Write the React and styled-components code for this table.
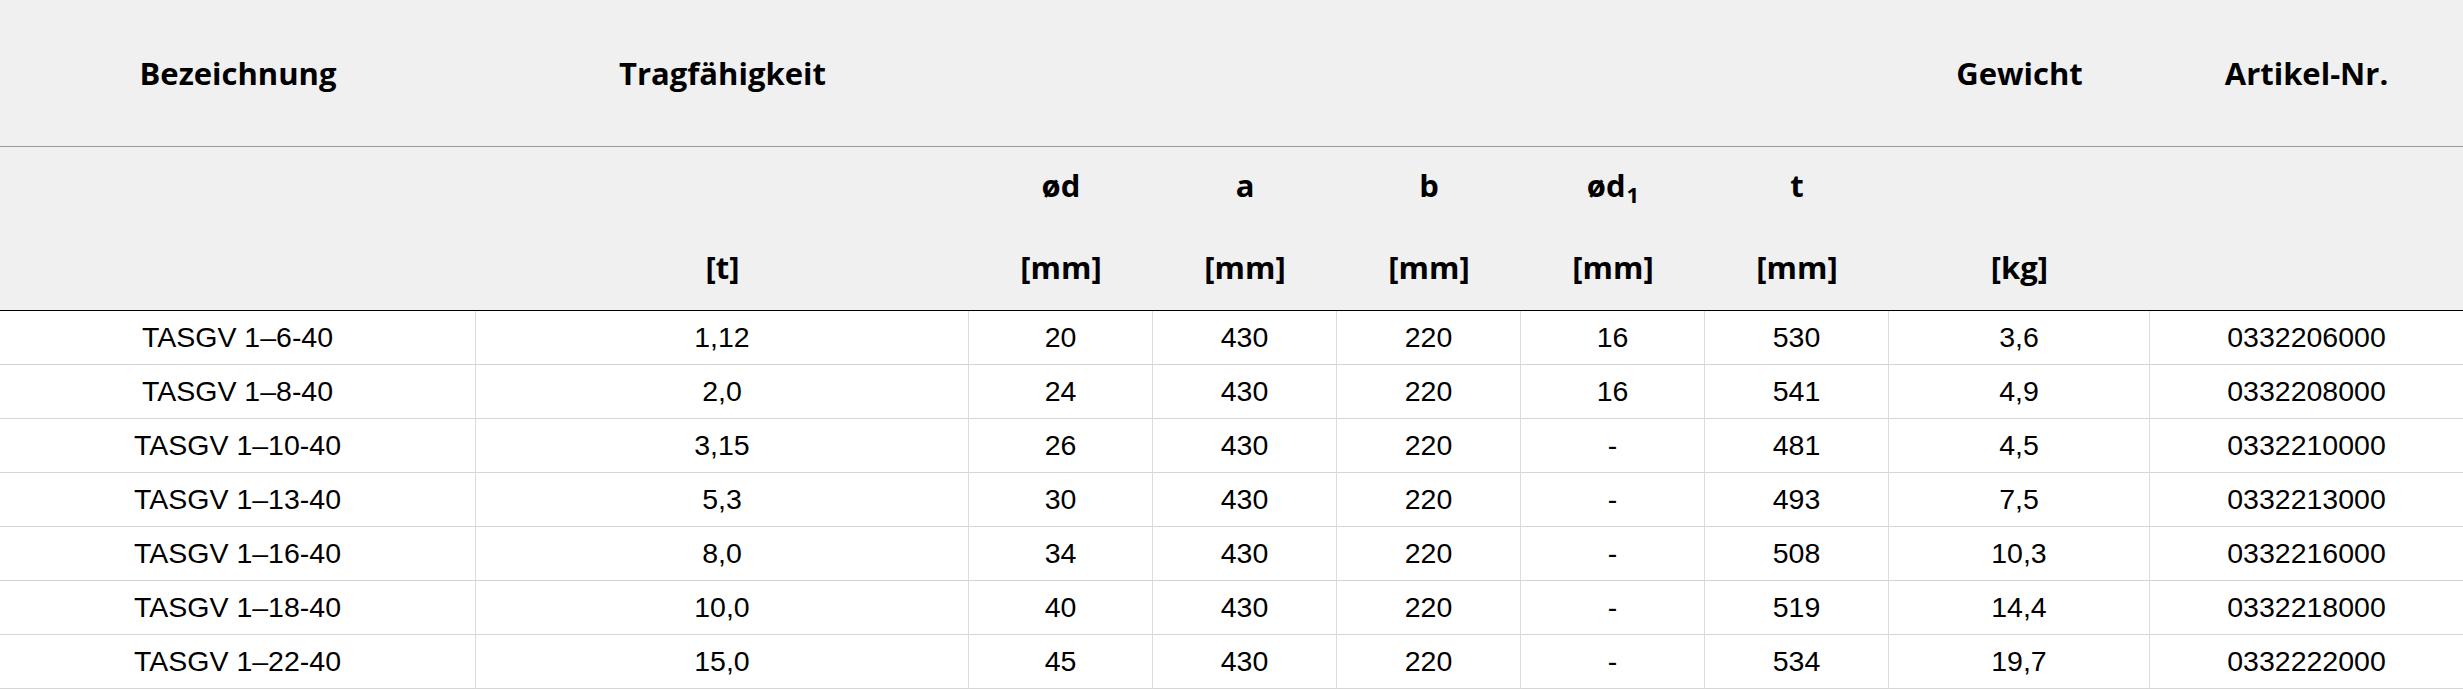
import React from 'react';
import styled, { createGlobalStyle } from 'styled-components';

const GlobalStyle = createGlobalStyle`
  html, body {
    margin: 0;
    padding: 0;
    background: #ffffff;
  }
`;

const Table = styled.table`
  width: 2463px;
  table-layout: fixed;
  border-collapse: separate;
  border-spacing: 0;
  font-family: 'Liberation Sans', Arial, sans-serif;
  color: #000;
`;

const HeadRow = styled.tr`
  height: ${props => props.h}px;
  background: #f0f0f0;
`;

const HeadCell = styled.th`
  padding: 0 0 ${props => props.lift || 0}px;
  font-family: 'Open Sans', 'Liberation Sans', sans-serif;
  font-weight: 700;
  font-size: 31px;
  text-align: center;
  vertical-align: middle;
  white-space: nowrap;
  border-bottom: ${props =>
    props.line === 'top' ? '1px solid #9a9a9a' : props.line === 'bottom' ? '1px solid #000' : 'none'};
`;

const Sub = styled.sub`
  font-size: 22px;
  vertical-align: -6px;
  line-height: 0;
  margin-left: 1px;
`;

const BodyRow = styled.tr`
  height: 54px;
`;

const Cell = styled.td`
  padding: 0;
  font-size: 28.5px;
  text-align: center;
  vertical-align: middle;
  white-space: nowrap;
  border-bottom: 1px solid #d6d6d6;
  border-right: 1px solid #dcdcdc;

  &:last-child {
    border-right: none;
  }
`;

const widths = [476, 493, 184, 184, 184, 184, 184, 261, 313];

const rows = [
  ['TASGV 1–6-40', '1,12', '20', '430', '220', '16', '530', '3,6', '0332206000'],
  ['TASGV 1–8-40', '2,0', '24', '430', '220', '16', '541', '4,9', '0332208000'],
  ['TASGV 1–10-40', '3,15', '26', '430', '220', '-', '481', '4,5', '0332210000'],
  ['TASGV 1–13-40', '5,3', '30', '430', '220', '-', '493', '7,5', '0332213000'],
  ['TASGV 1–16-40', '8,0', '34', '430', '220', '-', '508', '10,3', '0332216000'],
  ['TASGV 1–18-40', '10,0', '40', '430', '220', '-', '519', '14,4', '0332218000'],
  ['TASGV 1–22-40', '15,0', '45', '430', '220', '-', '534', '19,7', '0332222000'],
];

const top = ['Bezeichnung', 'Tragfähigkeit', '', '', '', '', '', 'Gewicht', 'Artikel-Nr.'];
const symbols = ['', '', 'ød', 'a', 'b', 'ød1', 't', '', ''];
const units = ['', '[t]', '[mm]', '[mm]', '[mm]', '[mm]', '[mm]', '[kg]', ''];

function Symbol({ text }) {
  if (text === 'ød1') {
    return (
      <>
        ød<Sub>1</Sub>
      </>
    );
  }
  return text;
}

export default function App() {
  return (
    <>
      <GlobalStyle />
      <Table>
        <colgroup>
          {widths.map((w, i) => (
            <col key={i} style={{ width: w }} />
          ))}
        </colgroup>
        <thead>
          <HeadRow h={147}>
            {top.map((t, i) => (
              <HeadCell key={i} line="top">{t}</HeadCell>
            ))}
          </HeadRow>
          <HeadRow h={81}>
            {symbols.map((t, i) => (
              <HeadCell key={i} lift={6}>
                <Symbol text={t} />
              </HeadCell>
            ))}
          </HeadRow>
          <HeadRow h={83}>
            {units.map((t, i) => (
              <HeadCell key={i} line="bottom" lift={5}>{t}</HeadCell>
            ))}
          </HeadRow>
        </thead>
        <tbody>
          {rows.map((r, i) => (
            <BodyRow key={i}>
              {r.map((c, j) => (
                <Cell key={j}>{c}</Cell>
              ))}
            </BodyRow>
          ))}
        </tbody>
      </Table>
    </>
  );
}
